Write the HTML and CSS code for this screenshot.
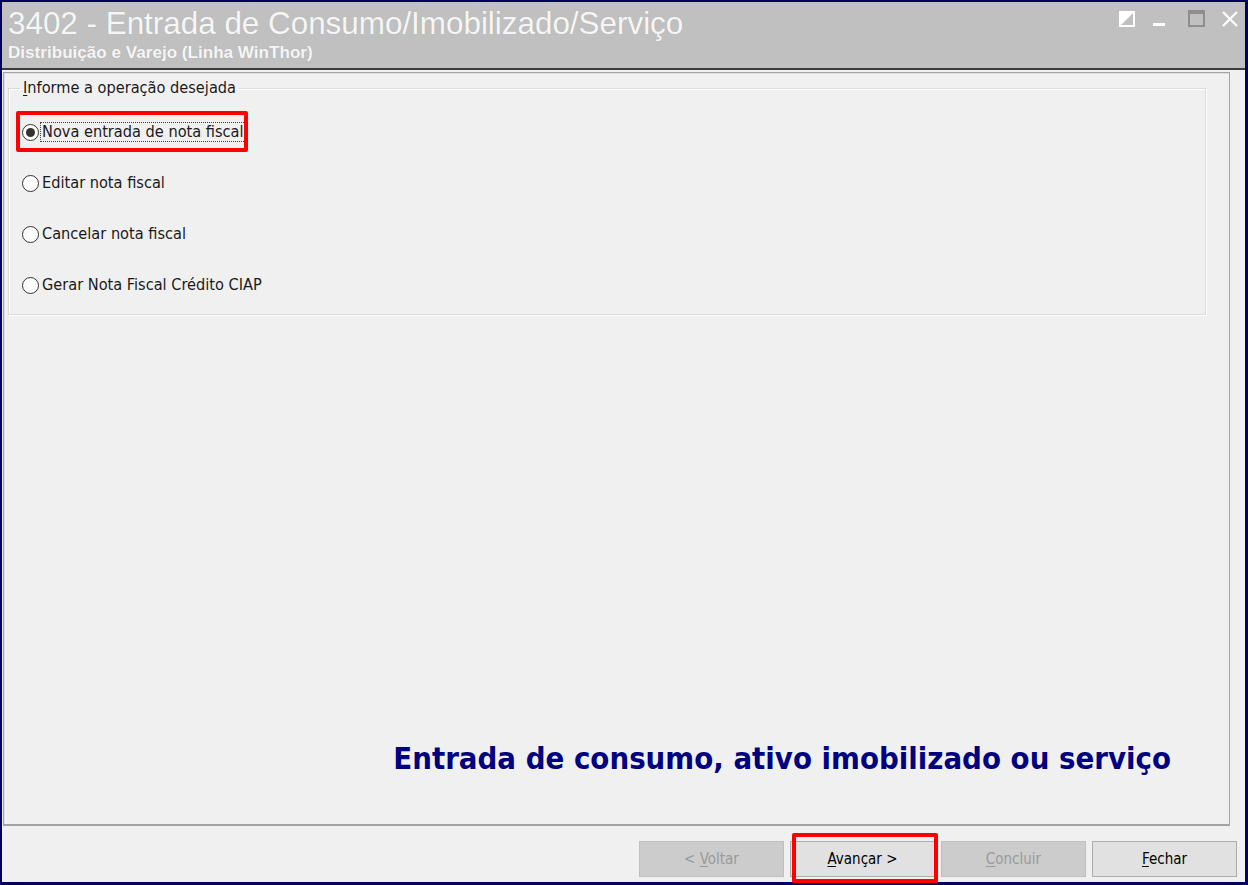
FILE: index.html
```html
<!DOCTYPE html>
<html lang="pt-BR">
<head>
<meta charset="utf-8">
<title>3402 - Entrada de Consumo/Imobilizado/Serviço</title>
<link rel="stylesheet" href="styles.css">
</head>
<body>
<div class="window">
  <div class="titlebar">
    <div class="titles">
      <div class="title">3402 - Entrada de Consumo/Imobilizado/Serviço</div>
      <div class="subtitle">Distribuição e Varejo (Linha WinThor)</div>
    </div>
    <svg class="controls" width="125" height="24" viewBox="0 0 125 24">
      <rect x="4" y="4" width="14" height="14" fill="none" stroke="#ffffff" stroke-width="2"/>
      <polygon points="4,4 18,4 4,18" fill="#ffffff"/>
      <rect x="37" y="15" width="12" height="3" fill="#ffffff"/>
      <rect x="73" y="3" width="15" height="15" fill="none" stroke="#8e8e8e" stroke-width="2"/>
      <rect x="72" y="2" width="17" height="4" fill="#8e8e8e"/>
      <path d="M107 4 L121 18 M121 4 L107 18" stroke="#ffffff" stroke-width="2.4" fill="none"/>
    </svg>
  </div>
  <div class="content">
    <div class="panel">
      <fieldset class="group">
        <legend class="legend"><span class="ul">I</span>nforme a operação desejada</legend>
        <div class="options">
          <div class="option"><span class="radio checked"></span><span class="label focus">Nova entrada de nota fiscal</span></div>
          <div class="option"><span class="radio"></span><span class="label">Editar nota fiscal</span></div>
          <div class="option"><span class="radio"></span><span class="label">Cancelar nota fiscal</span></div>
          <div class="option"><span class="radio"></span><span class="label">Gerar Nota Fiscal Crédito CIAP</span></div>
        </div>
      </fieldset>
      <div class="banner">Entrada de consumo, ativo imobilizado ou serviço</div>
    </div>
    <div class="footer">
      <div class="btn disabled"><span>&lt; <span class="ul">V</span>oltar</span></div>
      <div class="btn"><span><span class="ul">A</span>vançar &gt;</span></div>
      <div class="btn disabled"><span><span class="ul">C</span>oncluir</span></div>
      <div class="btn"><span><span class="ul">F</span>echar</span></div>
    </div>
  </div>
</div>
<div class="mark mark-option"></div>
<div class="mark mark-next"></div>
</body>
</html>
```

FILE: styles.css
```css
html, body {
  margin: 0;
  padding: 0;
}
body {
  position: relative;
  width: 1248px;
  height: 885px;
  overflow: hidden;
  background: #02025e;
  font-family: "DejaVu Sans Condensed", "DejaVu Sans", sans-serif;
}
.window {
  box-sizing: border-box;
  width: 1248px;
  height: 885px;
  border-style: solid;
  border-color: #02025e;
  border-width: 2px 3px 3px 2px;
  display: flex;
  flex-direction: column;
  background: #f0f0f0;
}
.titlebar {
  height: 66px;
  flex: none;
  background: #c0c0c0;
  border-bottom: 2px solid #3c3c3c;
  display: flex;
  align-items: flex-start;
}
.titles {
  padding: 5px 0 0 6px;
}
.title {
  font-family: "Liberation Sans", Arial, sans-serif;
  font-size: 31.4px;
  line-height: 34px;
  color: #f6f6f6;
  text-shadow: 0 0 1px #a8a8a8;
  white-space: nowrap;
}
.subtitle {
  margin-top: 2px;
  font-family: "Liberation Sans", Arial, sans-serif;
  font-weight: bold;
  font-size: 17.1px;
  line-height: 20px;
  color: #f6f6f6;
  text-shadow: 0 0 1px #a8a8a8;
  white-space: nowrap;
}
.controls {
  margin-left: auto;
  margin-right: 4px;
  margin-top: 6px;
  display: block;
}
.content {
  flex: 1;
  display: flex;
  flex-direction: column;
  background: #f0f0f0;
}
.panel {
  box-sizing: border-box;
  margin: 2px 0 0 1px;
  width: 1227px;
  height: 754px;
  border: 1px solid #a3a3a3;
  border-bottom-width: 2px;
  box-shadow: inset 1px 1px 0 #e2e2e2;
  display: flex;
  flex-direction: column;
}
.group {
  box-sizing: border-box;
  margin: 7px 0 0 4px;
  width: 1198px;
  height: 235px;
  padding: 0 0 0 11px;
  border: 1px solid #d9d9d9;
  box-shadow: 1px 1px 0 #ffffff, inset 1px 1px 0 #ffffff;
  min-width: 0;
}
.legend {
  padding: 0 3px;
  font-size: 16.2px;
  line-height: 16px;
  color: #1a1a1a;
}
.ul {
  text-decoration: underline;
  text-underline-offset: 2px;
}
.options {
  display: flex;
  flex-direction: column;
  gap: 31px;
  padding-top: 26px;
}
.option {
  display: flex;
  align-items: center;
  height: 20px;
}
.radio {
  box-sizing: border-box;
  width: 17px;
  height: 17px;
  margin-left: 2px;
  border: 1px solid #333333;
  border-radius: 50%;
  background: #ffffff;
  display: flex;
  align-items: center;
  justify-content: center;
  flex: none;
}
.radio.checked::after {
  content: "";
  width: 9px;
  height: 9px;
  border-radius: 50%;
  background: #333333;
}
.label {
  margin-left: 2px;
  font-size: 16.2px;
  line-height: 18px;
  color: #1a1a1a;
  padding: 0 1px;
  white-space: nowrap;
}
.label.focus {
  outline: 1px dotted #404040;
  outline-offset: 0;
}
.banner {
  margin-top: auto;
  padding: 0 58px 49px 0;
  text-align: right;
  font-weight: bold;
  font-size: 30.8px;
  line-height: 34px;
  color: #000080;
  white-space: nowrap;
}
.footer {
  display: flex;
  justify-content: flex-end;
  gap: 6px;
  padding: 15px 8px 0 0;
}
.btn {
  box-sizing: border-box;
  width: 145px;
  height: 36px;
  border: 1px solid #adadad;
  background: #e1e1e1;
  color: #000000;
  font-size: 15px;
  display: flex;
  align-items: center;
  justify-content: center;
  white-space: nowrap;
}
.btn.disabled {
  background: #cccccc;
  border-color: #bfbfbf;
  color: #9a9a9a;
}
.mark {
  position: absolute;
  box-sizing: border-box;
  border: 4px solid #ff0000;
  border-radius: 2px;
}
.mark-option {
  left: 16px;
  top: 111px;
  width: 232px;
  height: 41px;
}
.mark-next {
  left: 792px;
  top: 833px;
  width: 146px;
  height: 50px;
}
```
